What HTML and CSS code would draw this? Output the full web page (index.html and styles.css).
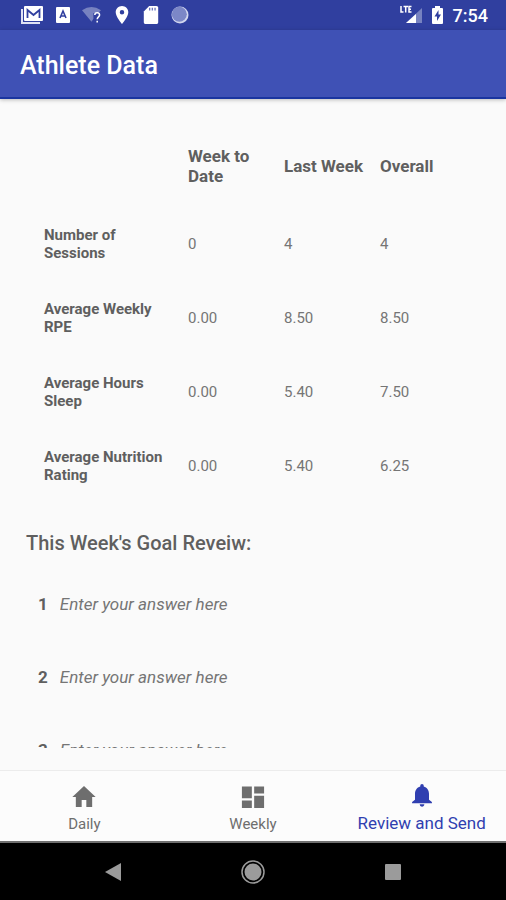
FILE: index.html
```html
<!DOCTYPE html>
<html lang="en">
<head>
<meta charset="utf-8">
<meta name="viewport" content="width=device-width, initial-scale=1">
<title>Athlete Data</title>
<link rel="stylesheet" href="styles.css">
</head>
<body>
<div class="status">
  <svg width="24" height="20" viewBox="0 0 24 20"><path d="M2 4v14h18" fill="none" stroke="#dfe2f4" stroke-width="2"/><rect x="4" y="1" width="19" height="15" rx="1" fill="#fff"/><path d="M7.500 13V5l6 5 6-5v8" fill="none" stroke="#303f9f" stroke-width="1.800"/></svg>
  <svg width="14" height="16" viewBox="0 0 14 16"><rect width="14" height="16" rx="1" fill="#fff"/><path d="M4 11l3-7 3 7M5 9h4" fill="none" stroke="#303f9f" stroke-width="1.600"/></svg>
  <svg width="19" height="18" viewBox="0 0 20 18"><path d="M0 4Q10-3 20 4l-3 3h-5v6l-2 3z" fill="#7782c0"/><path d="M13.500 9c0-3 5-3 5 0 0 2-2.500 2-2.500 4.500M16 15v2" fill="none" stroke="#fff" stroke-width="1.600"/></svg>
  <svg width="18" height="18" viewBox="2 2 20 20"><path d="M12 2C8.130 2 5 5.130 5 9c0 5.250 7 13 7 13s7-7.750 7-13c0-3.870-3.130-7-7-7zm0 9.500a2.500 2.500 0 110-5 2.500 2.500 0 010 5z" fill="#fff"/></svg>
  <svg width="16" height="18" viewBox="4 2 16 20"><path d="M18 2h-8L4 8v12c0 1.100.9 2 2 2h12c1.100 0 2-.9 2-2V4c0-1.100-.9-2-2-2z" fill="#fff"/><path d="M10.500 4v3M13.500 4v3M16.500 4v3" stroke="#6f7abf" stroke-width="1.500"/></svg>
  <svg width="18" height="18" viewBox="0 0 18 18"><circle cx="9" cy="9" r="8.500" fill="#d3d7ef"/><circle cx="8.300" cy="8.300" r="7.500" fill="#7c87c7"/></svg>
  <div class="status-right">
    <svg width="22" height="20" viewBox="0 0 22 20"><path d="M22 3v15H6z" fill="#7782c0"/><path d="M16 9v9H6z" fill="#fff"/><path d="M1 1v6h2.500M3.500 1.600H8M5.700 1.500v6M11.500 1.500H9v5.500h2.500M9 4.200h2" fill="none" stroke="#fff" stroke-width="1.500"/></svg>
    <svg width="11" height="18" viewBox="0 0 11 18"><path d="M3 0h5v2h2q1 0 1 1v14q0 1-1 1H1q-1 0-1-1V3q0-1 1-1h2z" fill="#fff"/><path d="M6.500 4L2.500 10.500H5V15l4-6.500H6.500z" fill="#303f9f"/></svg>
    <time>7:54</time>
  </div>
</div>
<header class="appbar"><h1>Athlete Data</h1></header>
<main>
  <table>
    <thead><tr><td class="label"></td><th scope="col">Week to Date</th><th scope="col">Last Week</th><th scope="col">Overall</th></tr></thead>
    <tbody>
      <tr><th scope="row">Number of Sessions</th><td>0</td><td>4</td><td>4</td></tr>
      <tr><th scope="row">Average Weekly RPE</th><td>0.00</td><td>8.50</td><td>8.50</td></tr>
      <tr><th scope="row">Average Hours Sleep</th><td>0.00</td><td>5.40</td><td>7.50</td></tr>
      <tr><th scope="row">Average Nutrition Rating</th><td>0.00</td><td>5.40</td><td>6.25</td></tr>
    </tbody>
  </table>
  <h2>This Week's Goal Reveiw:</h2>
  <div class="answer"><label for="a1">1</label><input id="a1" type="text" placeholder="Enter your answer here"></div>
  <div class="answer"><label for="a2">2</label><input id="a2" type="text" placeholder="Enter your answer here"></div>
  <div class="answer"><label for="a3">3</label><input id="a3" type="text" placeholder="Enter your answer here"></div>
</main>
<nav class="tabs">
  <a href="#daily"><svg width="28" height="28" viewBox="0 0 24 24"><path d="M10 20.500v-6h4v6h5v-8.500h3L12 2.500 2 12h3v8.500z"/></svg>Daily</a>
  <a href="#weekly"><svg width="28" height="28" viewBox="0 0 24 24"><path d="M2.500 13h8.500V3H2.500zm0 8.500h8.500V15H2.500zm10.500 0h8.500V11H13zM13 3v6h8.500V3z"/></svg>Weekly</a>
  <a href="#review" class="active" aria-current="page"><svg width="28" height="28" viewBox="0 0 24 24"><path d="M12 22c1.100 0 2-.9 2-2h-4a2 2 0 002 2zm6-6v-5c0-3.070-1.640-5.640-4.500-6.320V4a1.500 1.500 0 00-3 0v.68C7.630 5.360 6 7.920 6 11v5l-2.500 2v1h17v-1z"/></svg>Review and Send</a>
</nav>
<div class="system">
  <button aria-label="Back"><svg width="24" height="24" viewBox="0 0 24 24"><path d="M4 12l16-9v18z" fill="#9b9b9b"/></svg></button>
  <button aria-label="Home"><svg width="24" height="24" viewBox="0 0 24 24"><circle cx="12" cy="12" r="11" fill="none" stroke="#9b9b9b" stroke-width="1.500"/><circle cx="12" cy="12" r="8.500" fill="#9b9b9b"/></svg></button>
  <button aria-label="Recent apps"><svg width="24" height="24" viewBox="0 0 24 24"><rect x="4" y="4" width="16" height="16" rx="1" fill="#9b9b9b"/></svg></button>
</div>
</body>
</html>
```
FILE: styles.css
```css
* { box-sizing: border-box; }
body {
  margin: 0;
  height: 100vh;
  display: flex;
  flex-direction: column;
  background: #fafafa;
  color: #5f5f5f;
  font-family: Roboto, "Liberation Sans", sans-serif;
}
svg { display: block; flex: none; }
.status {
  flex: none;
  height: 30px;
  padding: 0 18px 0 20px;
  display: flex;
  align-items: center;
  gap: 12px;
  background: #303f9f;
  color: #fff;
}
.status-right {
  margin-left: auto;
  display: flex;
  align-items: center;
  gap: 10px;
  font-size: 18px;
  font-weight: 500;
}
.appbar {
  flex: none;
  height: 69px;
  padding: 4px 20px 0;
  display: flex;
  align-items: center;
  background: #3f51b5;
  border-bottom: 2px solid #1a35a0;
  box-shadow: 0 1px 4px rgba(0, 0, 0, .25);
  color: #fff;
}
h1 { margin: 0; font-size: 25px; font-weight: 500; }
main {
  flex: 1;
  min-height: 0;
  overflow: hidden;
  margin-bottom: 22px;
  padding: 25px 26px 0;
}
table {
  width: 100%;
  table-layout: fixed;
  border-collapse: collapse;
  font-size: 15px;
  line-height: 18px;
}
tr { height: 74px; }
thead tr { height: 83px; }
td, th { width: 96px; padding: 0; text-align: left; vertical-align: middle; }
th { font-weight: 700; padding-right: 10px; }
td { color: #757575; }
thead th { font-size: 17px; line-height: 20px; padding-right: 0; }
.label { width: 162px; }
tbody th { padding-left: 18px; }
thead th:last-child { width: auto; }
h2 { margin: 28px 0 12px; font-size: 20px; line-height: 24px; font-weight: 500; }
.answer {
  height: 73px;
  padding-left: 12px;
  display: flex;
  align-items: center;
  gap: 12px;
  font-size: 17px;
}
.answer label { font-weight: 700; }
.answer input {
  flex: 1;
  min-width: 0;
  padding: 0;
  border: 0;
  background: none;
  font: inherit;
  font-style: italic;
  color: #5c5c5c;
}
.answer input::placeholder { color: #757575; opacity: 1; }
.tabs {
  flex: none;
  height: 73px;
  display: flex;
  border-top: 1px solid #ececec;
  border-bottom: 2px solid #707070;
  background: #fcfcfc;
}
.tabs a {
  flex: 1 1 0;
  display: flex;
  flex-direction: column;
  align-items: center;
  justify-content: flex-end;
  gap: 4px;
  padding-bottom: 8px;
  color: #6e6e6e;
  font-size: 15px;
  line-height: 18px;
  text-decoration: none;
}
.tabs svg { fill: currentColor; }
.tabs .active { color: #303fb0; font-size: 17px; line-height: 20px; }
.system {
  flex: none;
  height: 57px;
  padding: 0 43px;
  display: flex;
  background: #000;
}
.system button {
  flex: 1;
  display: flex;
  align-items: center;
  justify-content: center;
  padding: 0;
  border: 0;
  background: none;
}
```
